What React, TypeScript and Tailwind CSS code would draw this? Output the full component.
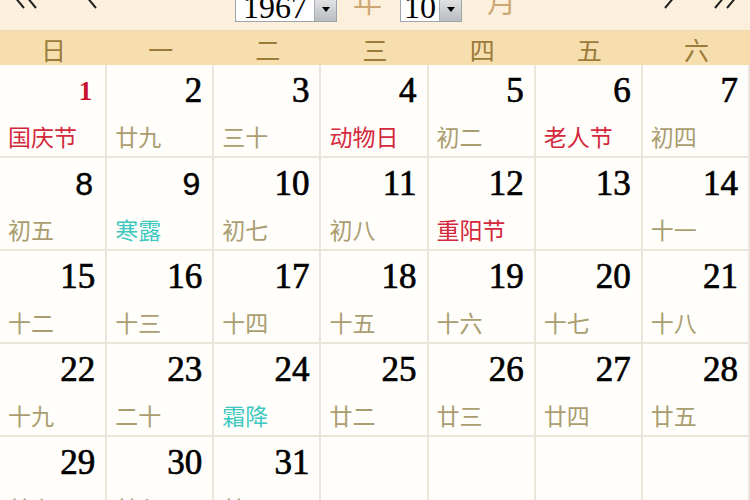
import React from "react";

type Day = { n?: number; sub?: string; kind?: "red" | "cyan" };

const weeks: Day[][] = [
    [
        { n: 1, sub: "国庆节", kind: "red" },
        { n: 2, sub: "廿九" },
        { n: 3, sub: "三十" },
        { n: 4, sub: "动物日", kind: "red" },
        { n: 5, sub: "初二" },
        { n: 6, sub: "老人节", kind: "red" },
        { n: 7, sub: "初四" },
    ],
    [
        { n: 8, sub: "初五" },
        { n: 9, sub: "寒露", kind: "cyan" },
        { n: 10, sub: "初七" },
        { n: 11, sub: "初八" },
        { n: 12, sub: "重阳节", kind: "red" },
        { n: 13, sub: "" },
        { n: 14, sub: "十一" },
    ],
    [
        { n: 15, sub: "十二" },
        { n: 16, sub: "十三" },
        { n: 17, sub: "十四" },
        { n: 18, sub: "十五" },
        { n: 19, sub: "十六" },
        { n: 20, sub: "十七" },
        { n: 21, sub: "十八" },
    ],
    [
        { n: 22, sub: "十九" },
        { n: 23, sub: "二十" },
        { n: 24, sub: "霜降", kind: "cyan" },
        { n: 25, sub: "廿二" },
        { n: 26, sub: "廿三" },
        { n: 27, sub: "廿四" },
        { n: 28, sub: "廿五" },
    ],
    [
        { n: 29, sub: "廿六" },
        { n: 30, sub: "廿七" },
        { n: 31, sub: "廿八" },
        {},
        {},
        {},
        {},
    ],
];

const weekdays = ["日", "一", "二", "三", "四", "五", "六"];

function Chevron({ double, right }: { double?: boolean; right?: boolean }) {
    const pts = right ? ["2,2 12,14 2,26"] : ["12,2 2,14 12,26"];
    return (
        <svg width={double ? 28 : 16} height="28" viewBox={double ? "0 0 28 28" : "0 0 16 28"} className="shrink-0">
            <polyline points={pts[0]} fill="none" stroke="#222" strokeWidth="2" />
            {double && (
                <polyline points={right ? "14,2 24,14 14,26" : "24,2 14,14 24,26"} fill="none" stroke="#222" strokeWidth="2" />
            )}
        </svg>
    );
}

function SelectBox({ value, width }: { value: string; width: string }) {
    return (
        <div className={`flex h-[30px] shrink-0 border border-[#9ea4ad] bg-white ${width}`}>
            <div className="flex-1 text-center font-['Liberation_Serif',serif] text-[32px] leading-[28px] text-black">
                {value}
            </div>
            <div className="flex w-[22px] items-end justify-center border-l border-[#a9adb3] bg-gradient-to-b from-[#eeeeee] to-[#b9bcc0] pb-[9px]">
                <div className="h-0 w-0 border-x-[4px] border-t-[5px] border-x-transparent border-t-black" />
            </div>
        </div>
    );
}

export default function App() {
    return (
        <div className="h-[500px] w-[750px] overflow-hidden bg-white">
            {/* top bar, cut off at top */}
            <div className="flex h-[31px] items-start overflow-hidden border-b border-[#efd8a9] bg-[#fcf0dc]">
                <div className="ml-[12px] -mt-[18px]"><Chevron double /></div>
                <div className="ml-[44px] -mt-[18px]"><Chevron /></div>
                <div className="ml-[135px] -mt-[8px]"><SelectBox value="1967" width="w-[102px]" /></div>
                <div className="ml-[16px] -mt-[21px] font-['Noto_Sans_CJK_SC',sans-serif] text-[29px] text-[#cda773]">年</div>
                <div className="ml-[18px] -mt-[8px]"><SelectBox value="10" width="w-[62px]" /></div>
                <div className="ml-[25px] -mt-[21px] font-['Noto_Sans_CJK_SC',sans-serif] text-[29px] text-[#cda773]">月</div>
                <div className="ml-[147px] -mt-[18px]"><Chevron right /></div>
                <div className="ml-[34px] -mt-[18px]"><Chevron double right /></div>
            </div>

            {/* weekday header */}
            <div className="grid h-[34px] grid-cols-7 bg-[#f6deaf]">
                {weekdays.map((w) => (
                    <div key={w} className="flex items-center justify-center pb-[3px] font-['Noto_Sans_CJK_SC',sans-serif] text-[25px] text-[#9b7a3a]">
                        {w}
                    </div>
                ))}
            </div>

            {/* days */}
            <div className="grid grid-cols-7">
                {weeks.flat().map((d, i) => (
                    <div key={i} className="h-[93px] border-b-2 border-r-2 border-[#ebe6da] bg-[#fffefb]">
                        {d.n !== undefined && (
                            <div
                                className={
                                    d.n === 1
                                        ? "mt-[8px] h-[36px] pr-[13px] text-right font-['Liberation_Serif',serif] text-[27px] font-bold leading-[36px] text-[#c8102e]"
                                        : d.n === 8 || d.n === 9
                                        ? "mt-[8px] h-[36px] pr-[12px] text-right font-['Liberation_Sans',sans-serif] text-[32px] leading-[36px] text-black [-webkit-text-stroke:0.4px_black]"
                                        : "mt-[8px] h-[36px] pr-[10px] text-right font-['Liberation_Serif',serif] text-[35px] leading-[36px] text-black [-webkit-text-stroke:0.7px_black]"
                                }
                            >
                                {d.n}
                            </div>
                        )}
                        {d.sub !== undefined && (
                            <div
                                className={
                                    "mt-[12px] pl-[8px] font-['Noto_Sans_CJK_SC',sans-serif] text-[23px] leading-[30px] " +
                                    (d.kind === "red" ? "text-[#d4283c]" : d.kind === "cyan" ? "text-[#40c8c0]" : "text-[#aa9d70]")
                                }
                            >
                                {d.sub}
                            </div>
                        )}
                    </div>
                ))}
            </div>
        </div>
    );
}
